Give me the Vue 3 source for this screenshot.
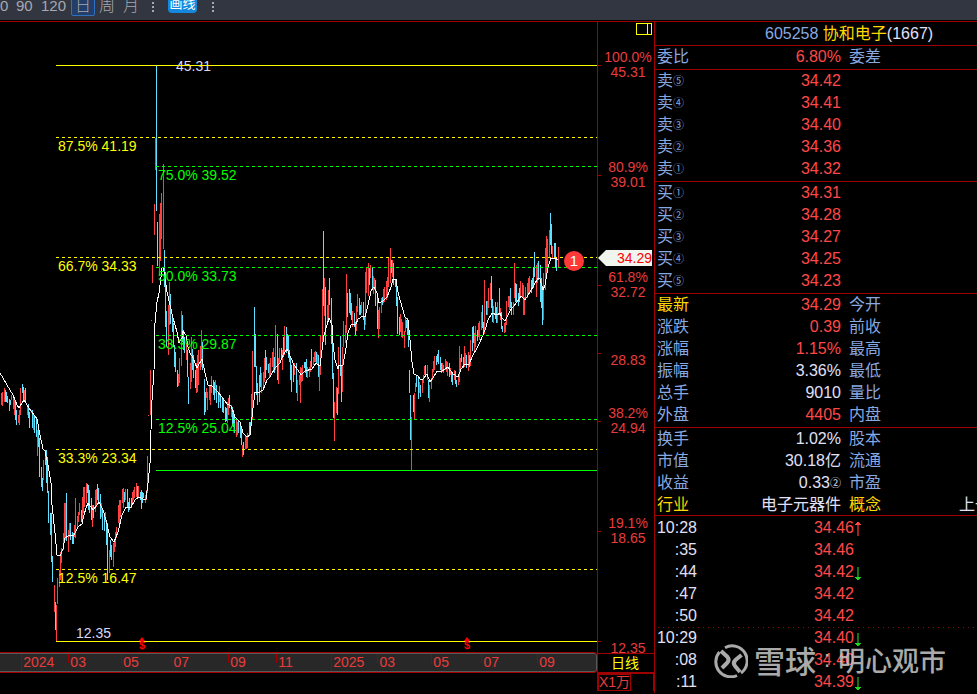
<script setup>
const periods = [
  { text: '0', size: 'w0' },
  { text: '90', size: 'w90' },
  { text: '120', size: 'w120' },
  { text: '日', size: 'day', active: true },
  { text: '周', size: 'week' },
  { text: '月', size: 'month' },
]

const goldLines = [137, 257, 449, 569]
const greenLines = [166, 267, 335, 419]

const goldLabels = [
  { y: 151, text: '87.5% 41.19' },
  { y: 271, text: '66.7% 34.33' },
  { y: 463, text: '33.3% 23.34' },
  { y: 583, text: '12.5% 16.47' },
]
const greenLabels = [
  { y: 180, text: '75.0% 39.52' },
  { y: 281, text: '50.0% 33.73' },
  { y: 349, text: '33.3% 29.87' },
  { y: 433, text: '12.5% 25.04' },
]

const axisTicks = [65, 175, 285, 353, 421, 531, 641]
const axisLabels = [
  { y: 62, text: '100.0%' },
  { y: 77, text: '45.31' },
  { y: 172, text: '80.9%' },
  { y: 187, text: '39.01' },
  { y: 282, text: '61.8%' },
  { y: 297, text: '32.72' },
  { y: 365, text: '28.83' },
  { y: 418, text: '38.2%' },
  { y: 433, text: '24.94' },
  { y: 528, text: '19.1%' },
  { y: 543, text: '18.65' },
  { y: 653, text: '12.35' },
]

// Bars are "x top bottom" triples, rising and falling kept apart.
const upBars = `1 393 405,2 392 406,4 388 402,11 395 400,13 398 409,14 398 415,18 415 423,19 410 425,20 388 415,24 390 400,
27 407 415,31 410 413,33 413 430,37 430 456,43 460 480,54 585 612,56 605 641,57 578 604,59 570 587,60 552 580,61 548 563,
63 533 550,64 503 542,65 503 540,68 530 552,69 523 537,74 525 537,75 498 538,77 516 527,78 512 522,79 503 515,82 497 522,
83 487 513,84 487 507,86 483 503,92 505 527,95 490 512,96 489 507,101 503 517,105 512 522,109 550 573,113 543 567,114 540 552,
115 532 547,116 527 538,118 505 523,119 500 523,120 500 517,122 489 503,123 488 508,125 489 500,132 492 505,133 490 500,
134 487 498,136 483 497,138 486 498,145 495 503,146 490 500,147 456 493,148 415 416,150 370 415,151 320 321,152 265 283,
154 204 235,155 138 170,159 214 271,160 203 261,161 193 239,163 164 249,168 305 355,169 282 325,178 374 386,179 358 383,
181 311 366,186 343 360,190 363 389,191 337 382,196 363 393,197 355 392,198 350 385,200 346 370,201 330 367,206 388 398,
207 392 410,209 385 400,210 386 405,211 376 393,215 380 393,219 386 402,227 402 423,228 398 415,231 405 417,236 420 437,
237 422 435,242 445 457,245 435 449,246 437 449,247 433 448,251 394 425,252 351 420,261 373 393,263 372 390,264 358 382,
269 363 378,270 358 377,272 352 367,273 348 370,275 325 370,278 358 384,279 348 363,282 350 370,284 326 355,294 363 375,
297 380 401,299 375 385,300 367 403,301 368 382,302 365 381,307 367 378,309 367 377,310 361 372,313 357 365,314 352 362,
315 351 362,317 354 364,319 365 391,320 336 375,322 289 345,324 278 316,327 305 323,328 290 320,334 402 441,336 387 413,
338 347 394,342 347 392,343 321 347,345 325 343,346 274 333,352 311 327,356 306 331,357 294 312,361 302 313,365 272 325,
366 268 293,368 263 296,370 265 278,373 276 294,374 278 290,378 310 338,379 307 329,381 298 313,383 289 303,384 287 302,
386 281 300,387 277 298,388 258 287,390 248 283,392 260 277,400 314 332,401 319 337,402 322 338,404 331 348,405 318 332,
411 417 470,414 393 419,415 383 392,419 382 393,422 379 393,423 375 383,424 366 375,427 365 380,429 385 402,431 378 389,
432 369 380,433 361 372,434 356 370,442 363 372,443 365 373,445 359 370,446 361 372,447 362 376,450 368 375,454 370 380,
458 377 385,459 346 382,460 358 370,464 346 367,465 353 365,468 352 371,470 340 366,474 333 352,475 326 347,478 323 337,
479 321 340,481 312 330,484 280 334,487 301 315,488 288 308,490 283 300,493 306 323,497 302 323,500 308 320,504 323 333,
505 322 332,506 301 325,508 296 307,509 296 310,513 302 315,514 263 298,520 281 297,522 283 297,523 285 315,524 297 315,
525 287 300,527 283 298,528 278 293,529 276 292,536 265 297,537 263 283,543 273 320,545 248 290,546 236 277,547 239 270,
549 230 257,552 246 258,558 247 268`

const downBars = `5 390 402,6 392 402,7 396 403,9 399 411,10 400 405,15 400 420,16 410 425,22 384 393,23 387 400,25 388 403,28 404 418,
29 412 428,32 410 428,34 415 433,36 418 437,38 430 447,39 438 477,41 467 487,42 478 491,45 450 465,46 450 483,47 457 493,
48 491 523,50 513 535,51 513 562,52 556 582,55 602 630,66 493 541,70 523 540,72 532 544,73 533 544,81 510 522,87 484 493,
88 485 510,89 490 513,91 498 520,93 505 518,97 484 500,98 488 503,100 494 519,102 510 530,104 515 531,106 523 545,107 523 580,
110 540 557,111 545 560,124 492 502,127 489 508,128 502 512,129 498 510,131 498 508,137 486 497,140 492 500,141 490 509,
142 492 503,143 493 498,156 65 211,157 222 266,164 250 287,165 272 327,166 311 347,170 294 324,172 316 332,173 323 347,
174 345 367,175 352 372,177 370 387,182 315 342,183 330 350,184 337 353,187 350 377,188 377 404,192 349 370,193 355 378,
195 370 388,202 342 370,204 379 415,205 392 412,213 380 395,214 382 400,216 385 403,218 392 408,220 395 408,222 398 412,
223 400 413,225 407 422,226 408 421,229 395 408,232 407 426,233 410 427,234 417 433,238 420 433,240 423 438,241 428 445,
243 442 455,249 422 435,250 422 430,254 307 367,255 334 367,256 366 395,257 383 405,259 375 402,260 367 387,265 350 378,
266 357 370,268 364 373,274 357 373,277 334 380,281 348 360,283 337 357,286 327 353,287 334 350,288 335 358,289 350 362,
290 357 380,291 365 392,293 363 382,296 363 393,304 362 368,305 362 373,306 359 377,311 349 367,316 352 363,318 355 377,
323 231 306,325 287 345,329 278 305,331 298 344,332 335 379,333 373 418,337 388 415,340 336 376,341 365 402,347 293 317,
349 289 313,350 293 315,351 303 320,354 313 327,355 322 335,359 298 315,360 305 315,363 302 320,364 317 330,369 268 285,
372 267 288,375 280 306,377 298 329,382 297 305,391 260 273,393 263 285,395 280 287,396 280 306,397 297 334,399 317 335,
406 320 328,407 318 335,408 327 347,409 370 393,410 395 440,413 395 412,416 375 387,418 376 399,420 385 397,425 365 377,
428 380 398,436 356 365,437 354 362,438 350 364,440 357 370,441 363 373,449 363 377,451 372 382,452 373 385,455 371 384,
456 380 387,461 354 362,463 357 368,466 355 368,469 355 367,472 327 351,473 326 343,477 330 341,482 305 328,483 322 333,
486 301 315,491 276 308,492 299 322,495 302 319,496 307 323,499 288 315,501 312 329,502 326 332,510 288 308,511 302 315,
515 283 302,516 284 302,518 293 306,519 288 302,531 280 293,532 278 288,533 267 288,534 252 277,538 261 280,540 265 302,
541 278 308,542 288 325,550 213 245,551 224 254,554 243 258,555 243 268,556 257 271`

const toPath = (bars) =>
  bars
    .split(',')
    .map((bar) => {
      const [x, top, bottom] = bar.trim().split(' ').map(Number)
      return `M${x + 0.5} ${top}V${bottom}`
    })
    .join('')

const upPath = toPath(upBars)
const downPath = toPath(downBars)

const average = `0,373 3,378 7,385 13,395 17,405 19,408 22,403 24,400 29,408 37,419 40,435 43,449 45,451 48,465 51,483 52,505
55,533 57,555 60,556 63,549 65,538 68,536 74,535 78,527 82,524 84,515 86,508 88,503 93,510 97,505 99,502 103,510 106,520
110,537 114,542 118,532 122,515 126,507 131,507 135,500 139,497 143,499 146,499 148,483 150,463 151,430 152,400 154,370
155,323 157,302 159,293 161,277 162,268 163,267 165,277 167,292 170,305 173,318 177,332 179,343 182,338 183,331 186,335
188,347 190,353 193,358 197,368 202,359 205,373 208,385 212,386 217,391 222,397 227,404 231,406 235,417 240,422 243,433
247,437 250,435 252,417 254,400 255,392 258,393 263,390 267,380 270,377 275,368 280,363 283,355 287,349 291,358 294,365
298,370 301,375 305,371 312,369 316,363 320,366 322,350 324,335 327,325 329,318 332,325 333,343 335,360 338,369 339,365
343,365 346,348 348,333 351,325 356,324 358,319 363,316 365,317 368,305 371,291 374,287 377,293 379,303 383,301 387,297
391,287 393,279 396,279 398,292 402,307 405,317 408,320 410,340 412,362 414,374 418,376 421,380 423,379 427,374 430,382
433,378 437,371 442,371 448,367 453,374 458,377 461,369 465,364 469,364 473,355 477,348 480,342 485,330 488,320 492,313
497,315 500,313 502,318 505,321 510,311 513,307 517,302 521,296 525,300 530,292 534,285 538,278 540,279 543,290 545,285
548,267 551,258 555,258 558,260`

// span is the share of the time axis that a label's section takes.
const months = [
  { text: '', span: 22 },
  { text: '2024', span: 47, year: true },
  { text: '03', span: 53 },
  { text: '05', span: 50 },
  { text: '07', span: 57 },
  { text: '09', span: 48 },
  { text: '11', span: 55 },
  { text: '2025', span: 46, year: true },
  { text: '03', span: 54 },
  { text: '05', span: 50 },
  { text: '07', span: 56 },
  { text: '09', span: 59 },
]

const sells = [
  ['⑤', '34.42'],
  ['④', '34.41'],
  ['③', '34.40'],
  ['②', '34.36'],
  ['①', '34.32'],
]
const buys = [
  ['①', '34.31'],
  ['②', '34.28'],
  ['③', '34.27'],
  ['④', '34.25'],
  ['⑤', '34.23'],
]
const depth = [
  { side: '卖', rows: sells },
  { side: '买', rows: buys },
]

const stats = [
  [
    { a: '最新', v: '34.29', b: '今开', tone: 'red', hotA: true },
    { a: '涨跌', v: '0.39', b: '前收', tone: 'red' },
    { a: '涨幅', v: '1.15%', b: '最高', tone: 'red' },
    { a: '振幅', v: '3.36%', b: '最低', tone: 'white' },
    { a: '总手', v: '9010', b: '量比', tone: 'white' },
    { a: '外盘', v: '4405', b: '内盘', tone: 'red' },
  ],
  [
    { a: '换手', v: '1.02%', b: '股本', tone: 'white' },
    { a: '市值', v: '30.18亿', b: '流通', tone: 'white' },
    { a: '收益', v: '0.33', note: '②', b: '市盈', tone: 'white' },
    { a: '行业', v: '电子元器件', b: '概念', w: '上一', tone: 'white', hotA: true, hotB: true },
  ],
]

const trades = [
  { t: '10:28', p: '34.46', dir: 'up' },
  { t: ':35', p: '34.46' },
  { t: ':44', p: '34.42', dir: 'down' },
  { t: ':47', p: '34.42' },
  { t: ':50', p: '34.42' },
  { t: '10:29', p: '34.40', dir: 'down', minute: true },
  { t: ':08', p: '34.40' },
  { t: ':11', p: '34.39', dir: 'down' },
]
</script>

<template>
  <div class="app">
    <nav class="toolbar">
      <button
        v-for="p in periods"
        :key="p.text"
        type="button"
        class="period"
        :class="[p.size, { active: p.active }]"
      >{{ p.text }}</button>
      <span class="dots"><i></i><i></i><i></i><i></i></span>
      <button type="button" class="draw">画线</button>
      <span class="dots"><i></i><i></i><i></i><i></i></span>
    </nav>

    <main class="main">
      <section class="left">
        <svg class="chart" viewBox="0 22 654 631" role="img" aria-label="日线">
          <g shape-rendering="crispEdges" fill="none">
            <path d="M597.5 22V653" class="frame" />
            <path v-for="y in axisTicks" :key="y" :d="`M598 ${y + 0.5}h3`" class="frame" />
            <path :d="upPath" class="up" />
            <path :d="downPath" class="down" />
            <polyline :points="average" class="average" />
          </g>
          <g class="label gold-text">
            <text v-for="l in goldLabels" :key="l.y" x="58" :y="l.y">{{ l.text }}</text>
          </g>
          <g class="label green-text">
            <text v-for="l in greenLabels" :key="l.y" x="158" :y="l.y">{{ l.text }}</text>
          </g>
          <g class="label pale-text">
            <text x="176" y="71">45.31</text>
            <text x="76" y="638">12.35</text>
          </g>
          <g shape-rendering="crispEdges" fill="none">
            <path d="M56 65.5H597M56 641.5H597" class="gold" />
            <path v-for="y in goldLines" :key="y" :d="`M56 ${y + 0.5}H597`" class="gold dashed" />
            <path v-for="y in greenLines" :key="y" :d="`M156 ${y + 0.5}H597`" class="green dashed" />
            <path d="M156 470.5H597" class="green" />
            <path d="M636.5 23.5h15v11h-15zM647.5 23v12" class="gold" />
          </g>
          <g v-for="x in [142, 467]" :key="x" class="dividend">
            <path :d="`M${x - 3} 641l3 -4 3 4z`" />
            <text :x="x" y="649" text-anchor="middle">$</text>
          </g>
          <circle cx="574" cy="261" r="10" class="marker" />
          <text x="574" y="266" text-anchor="middle" class="marker-text">1</text>
          <g class="label axis-text" text-anchor="middle">
            <text v-for="l in axisLabels" :key="l.y" x="628" :y="l.y">{{ l.text }}</text>
          </g>
          <path d="M598 258L606 250H652V266H606z" class="tag" />
          <text x="652" y="263" text-anchor="end" class="label tag-text">34.29</text>
        </svg>
        <div class="bottom">
          <div class="timeline">
            <span
              v-for="(m, i) in months"
              :key="i"
              class="month-cell"
              :class="{ year: m.year, blank: !m.text }"
              :style="{ flexGrow: m.span }"
            >{{ m.text }}</span>
          </div>
          <button type="button" class="cycle">日线</button>
          <div class="under"></div>
          <div class="unit-cell"><span class="unit">X1万</span></div>
        </div>
      </section>

      <aside class="quote">
        <h1 class="title"><span class="code">605258</span> <span class="name">协和电子</span><span>(1667)</span></h1>
        <table class="group ratio">
          <tbody>
            <tr><th>委比</th><td class="red">6.80%</td><th class="second">委差</th></tr>
          </tbody>
        </table>
        <table v-for="d in depth" :key="d.side" class="group">
          <tbody>
            <tr v-for="r in d.rows" :key="r[0]">
              <th>{{ d.side }}<small>{{ r[0] }}</small></th>
              <td class="red">{{ r[1] }}</td>
            </tr>
          </tbody>
        </table>
        <table v-for="(g, i) in stats" :key="i" class="group">
          <tbody>
            <tr v-for="r in g" :key="r.a">
              <th :class="{ hot: r.hotA }">{{ r.a }}</th>
              <td :class="r.tone">{{ r.v }}<small v-if="r.note">{{ r.note }}</small></td>
              <th class="second" :class="{ hot: r.hotB }">{{ r.b }}</th>
              <td v-if="r.w" class="extra">{{ r.w }}</td>
            </tr>
          </tbody>
        </table>
        <table class="group trades">
          <tbody>
            <tr v-for="r in trades" :key="r.t" :class="{ minute: r.minute }">
              <td>{{ r.t }}</td>
              <td class="red">{{ r.p }}</td>
              <td class="arrow">
                <svg v-if="r.dir === 'up'" width="8" height="16" viewBox="0 0 8 16" shape-rendering="crispEdges">
                  <path d="M4 1v14" stroke="#a02020" stroke-width="2" />
                  <path d="M3 1h2v1h1v1h1v1H1V3h1V2h1z" fill="#ff4848" />
                </svg>
                <svg v-else-if="r.dir === 'down'" width="8" height="16" viewBox="0 0 8 16" shape-rendering="crispEdges">
                  <path d="M4 2v12" stroke="#187018" stroke-width="2" />
                  <path d="M1 12h6v1H6v1H5v1H3v-1H2v-1H1z" fill="#20d820" />
                </svg>
              </td>
            </tr>
          </tbody>
        </table>
      </aside>
    </main>

    <div class="watermark">
      <svg width="34" height="34" viewBox="0 0 34 34" fill="none">
        <path d="M11 3.700A15 15 0 0 1 27 29M5.500 8A15 15 0 0 0 23 31.500" stroke-width="3" />
        <path d="M7 7L13.500 13Q16 16 13 19L8 24" stroke-width="4" />
        <path d="M27.500 11L21.500 16Q18.500 19 21 22L26 28" stroke-width="4" />
      </svg>
      <span class="brand">雪球</span><span class="colon">:</span><span class="author">明心观市</span>
    </div>
  </div>
</template>

<style>
body {
  background: #000;
}
</style>

<style scoped>
.app {
  position: relative;
  min-height: 100vh;
  overflow: hidden;
  background: #000;
  color: #e0e0f8;
  font-family: "Liberation Sans", "Noto Sans CJK SC", sans-serif;
  font-size: 16px;
  font-weight: 400;
}

button {
  padding: 0;
  border: 0;
  background: none;
  color: inherit;
  font: inherit;
}

.toolbar {
  display: flex;
  align-items: flex-end;
  height: 16px;
  padding-bottom: 4px;
  border-bottom: 1px solid #000;
  background: #323640;
  color: #a8a8b0;
  font-weight: 300;
}

.period {
  box-sizing: border-box;
  flex: none;
  height: 22px;
  line-height: 24px;
  text-align: center;
}

.w0,
.w90,
.w120 {
  font-size: 15px;
  text-align: left;
}

.w0 { width: 16px; }
.w90 { width: 25px; }
.w120 { width: 30px; }
.day { width: 24px; }
.week { width: 24px; }
.month { width: 24px; }

.active {
  border: 1px solid #2f70c0;
  border-radius: 2px;
  background: #233e68;
  line-height: 22px;
}

.dots {
  display: flex;
  flex-direction: column;
  gap: 2px;
  width: 2px;
  margin: 0 14px 4px 9px;
}

.dots i {
  height: 1px;
  border-bottom: 1px solid #a8a8b0;
  background: #a8a8b0;
}

.draw {
  flex: none;
  width: 29px;
  height: 18px;
  margin-bottom: 3px;
  border-radius: 4px;
  background: #1488dc;
  color: #fff;
  font-size: 13px;
  font-weight: 400;
  line-height: 18px;
}

.draw + .dots {
  margin-left: 15px;
}

.main {
  display: flex;
  border-top: 1px solid #a00000;
}

.left {
  flex: 1;
  min-width: 0;
}

.chart {
  display: block;
  width: 100%;
}

.frame { stroke: #a00000; }
.up { stroke: #ff4040; }
.down { stroke: #60e0ff; }
.average { stroke: #fff; }
.gold { stroke: #ff0; }
.green { stroke: #0f0; }
.dashed { stroke-dasharray: 3 3; }

.label { font-size: 14px; }
.gold-text { fill: #ff0; }
.green-text { fill: #0f0; }
.pale-text { fill: #d8d8f8; }
.axis-text { fill: #e83c3c; }
.tag { fill: #f0f5ee; }
.tag-text { fill: #f00; }

.dividend {
  fill: #f00;
  font-size: 11px;
  font-weight: 700;
}

.marker { fill: #ff3838; }
.marker-text { fill: #fff; font-size: 15px; }

.bottom {
  display: grid;
  grid-template-columns: 1fr 57px;
}

.timeline {
  display: flex;
  height: 17px;
  border: 1px solid #585858;
  border-left: 0;
  border-radius: 0 3px 3px 0;
  background: #282828;
  outline: 1px solid #a00000;
  color: #e83c3c;
  font-size: 14px;
  line-height: 17px;
}

.month-cell {
  box-sizing: border-box;
  flex-basis: 0;
  min-width: 0;
  padding-left: 2px;
  background: linear-gradient(#a00000, #a00000) left top / 1px 9px no-repeat;
}

.year {
  background-size: 1px 17px;
}

.blank {
  padding: 0;
  background: none;
}

.cycle {
  height: 19px;
  padding-right: 2px;
  border-top: 1px solid #a00000;
  border-left: 1px solid #a00000;
  color: #ff0;
  font-size: 14px;
  line-height: 17px;
}

.unit-cell {
  border: 2px solid #a00000;
  border-width: 2px 1px 0 2px;
}

.unit {
  display: block;
  width: 31px;
  height: 15px;
  border: 1px solid #a00000;
  border-left: 0;
  color: #e83c3c;
  font-size: 14px;
  line-height: 15px;
  white-space: nowrap;
}

.quote {
  flex: none;
  width: 322px;
  overflow: hidden;
  border-left: 1px solid #a00000;
}

.title {
  height: 23px;
  margin: 0;
  padding-left: 110px;
  font-size: 16px;
  font-weight: 400;
  line-height: 23px;
  white-space: nowrap;
}

.code { color: #88a8e0; }
.name { color: #ffd800; }

.group {
  display: block;
  padding-bottom: 1px;
  border-top: 1px solid #a00000;
  border-spacing: 0;
}

.group tbody {
  display: block;
}

.group tr {
  display: grid;
  grid-template-columns: 44px 142px 118px 1fr;
  height: 22px;
  line-height: 22px;
  white-space: nowrap;
}

.group th,
.group td {
  padding: 0;
  font-weight: 400;
}

.group th {
  padding-left: 2px;
  color: #88a8e0;
  text-align: left;
}

.group td {
  text-align: right;
}

.group .second {
  padding-left: 8px;
}

.group .hot { color: #ffd800; }
.group .red { color: #ff4848; }
.group .extra { text-align: left; }

small {
  font-size: 11px;
  vertical-align: 1px;
}

.group.trades {
  margin-top: -2px;
  padding-top: 1px;
  padding-bottom: 0;
  background: #000;
}

.group.trades tr {
  grid-template-columns: 42px 157px 9px 1fr;
}

.group.trades .minute {
  background: repeating-linear-gradient(90deg, #801010 0 1px, transparent 1px 5px) 3px 0 / 100% 1px no-repeat;
}

.arrow svg {
  display: block;
  margin-top: 4px;
}

.watermark {
  position: absolute;
  top: 638px;
  right: 31px;
  display: flex;
  align-items: center;
  height: 42px;
  color: #c8c8c8;
  font-weight: 500;
  opacity: 0.85;
}

.watermark svg {
  margin: 4px 6px 0 0;
  stroke: #c8c8c8;
}

.brand { font-size: 31px; }
.colon { width: 22px; font-size: 24px; text-align: center; }
.author { font-size: 27px; }
</style>
